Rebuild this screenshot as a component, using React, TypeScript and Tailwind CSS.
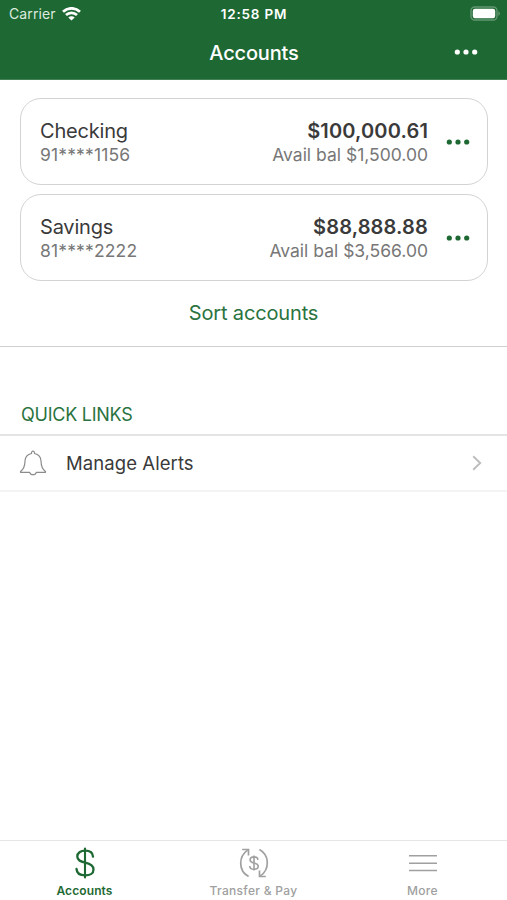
const accounts = [
  { name: 'Checking', number: '91****1156', balance: '$100,000.61', available: '$1,500.00' },
  { name: 'Savings', number: '81****2222', balance: '$88,888.88', available: '$3,566.00' },
];

function Dots() {
  return (
    <svg width="24" height="6" viewBox="0 0 24 6" fill="currentColor" aria-hidden="true">
      <circle cx="3.3" cy="3" r="2.6" />
      <circle cx="12" cy="3" r="2.6" />
      <circle cx="20.7" cy="3" r="2.6" />
    </svg>
  );
}

function WifiIcon() {
  return (
    <svg width="19" height="14" viewBox="0 0 19 14" fill="none" stroke="currentColor" strokeWidth="2.7" aria-hidden="true">
      <path d="M1 4.7a12.3 12.3 0 0 1 17 0" />
      <path d="M4 8.1a8 8 0 0 1 11 0" />
      <path d="M9.5 13.6 6.3 10.5a4.5 4.5 0 0 1 6.4 0Z" fill="currentColor" stroke="none" />
    </svg>
  );
}

function BatteryIcon() {
  return (
    <svg width="31" height="15" viewBox="0 0 31 15" fill="none" aria-hidden="true">
      <rect x="1" y="1" width="26" height="13" rx="3.8" stroke="#fff" strokeOpacity="0.3" strokeWidth="1.4" />
      <rect x="2.8" y="2.8" width="22.4" height="9.4" rx="2.2" fill="#fff" />
      <path d="M28.5 5.2c1.6.6 1.6 4 0 4.6Z" fill="#fff" fillOpacity="0.4" />
    </svg>
  );
}

function BellIcon() {
  return (
    <svg width="28" height="26" viewBox="0 0 28 26" fill="none" stroke="#8c8c8c" strokeWidth="1.2" strokeLinejoin="round" aria-hidden="true">
      <path d="M12.5 3.5C12.4 2 13 1.2 14 1.2s1.6.8 1.5 2.3c4 .9 6.4 3.6 6.5 7.5.1 5.5.9 8 4.5 10.6v.7h-9.2c-.4 1.5-1.6 2.400-3.300 2.400s-2.900-.9-3.300-2.400H1.500v-.7C5.100 19 5.900 16.500 6 11c.1-3.900 2.500-6.600 6.500-7.500Z" />
    </svg>
  );
}

function DollarIcon() {
  return (
    <svg width="20" height="32" viewBox="0 0 20 32" fill="none" stroke="currentColor" strokeWidth="2.3" strokeLinecap="round" aria-hidden="true">
      <path d="M10 1.5v29" strokeWidth="2.1" />
      <path d="M18 9.6C17.8 5.8 14.8 3.7 10.2 3.7 5.5 3.7 2.3 5.9 2.3 9.5c0 3.800 3 5 7.900 6.200 5 1.200 8.300 2.700 8.300 6.700 0 3.700-3.300 6-8.300 6-5.200 0-8.500-2.400-8.700-6.500" />
    </svg>
  );
}

function TransferIcon() {
  return (
    <svg width="32" height="32" viewBox="0 0 32 32" fill="none" stroke="currentColor" strokeWidth="1.7" aria-hidden="true">
      <path d="M10.6 29.5C.2 24 .3 9.5 9.6 3.1" />
      <path d="M4.2 2.5h6.3v6" />
      <path d="M21.4 2.5c10.4 5.5 10.3 20 1 26.4" />
      <path d="M27.8 29.5h-6.3v-6" />
      <path d="M16 8.5v15M19.9 12.9c-.1-1.900-1.600-3-3.900-3s-3.900 1.100-3.900 3c0 2 1.500 2.500 3.900 3.100s4.200 1.200 4.200 3.300c0 1.900-1.800 3-4.200 3-2.500 0-4.200-1.200-4.300-3.300" strokeWidth="1.6" />
    </svg>
  );
}

function MenuIcon() {
  return (
    <svg width="30" height="20" viewBox="0 0 30 20" stroke="currentColor" strokeWidth="1.6" aria-hidden="true">
      <path d="M1 2.7h28M1 10.2h28M1 17.5h28" />
    </svg>
  );
}

export default function App() {
  return (
    <div className="flex h-[900px] w-[507px] flex-col overflow-hidden bg-white font-['Inter','Liberation_Sans',sans-serif] text-[#3a3a3a]">
      <header className="h-20 shrink-0 border-b border-[#448055] bg-[#1e6933] text-white">
        <div className="grid h-[27px] grid-cols-3 items-center pr-[6px] pl-[9px]">
          <div className="flex items-center gap-[6px]">
            <span className="text-[14px] tracking-[0.1px] text-[#dce9df]">Carrier</span>
            <WifiIcon />
          </div>
          <span className="-ml-[2px] pt-px text-center text-[13.5px] font-semibold tracking-[0.8px]">12:58 PM</span>
          <div className="flex justify-end">
            <BatteryIcon />
          </div>
        </div>
        <div className="grid h-[51px] grid-cols-[1fr_auto_1fr] items-center pr-[29px] pl-[30px]">
          <h1 className="col-start-2 text-[20px] font-medium tracking-[-0.15px]">Accounts</h1>
          <button className="justify-self-end pb-px" aria-label="More options">
            <Dots />
          </button>
        </div>
      </header>

      <main className="flex-1">
        <section className="border-b border-[#cfcfcf] pt-[18px]">
          <div className="flex flex-col gap-[9px] pr-[19px] pl-5">
            {accounts.map((account) => (
              <div
                key={account.name}
                className="flex h-[87px] items-center rounded-[21px] border-[1.5px] border-[#d3d3d3] pr-[17px] pl-[19px]"
              >
                <div className="flex-1 pt-px">
                  <div className="text-[20px] leading-[24px] tracking-[-0.2px]">{account.name}</div>
                  <div className="text-[17.5px] leading-[23px] tracking-[0.15px] text-[#777]">{account.number}</div>
                </div>
                <div className="pt-px text-right">
                  <div className="text-[20px] leading-[24px] font-semibold tracking-[0.15px]">{account.balance}</div>
                  <div className="text-[17.5px] leading-[23px] text-[#777]">Avail bal {account.available}</div>
                </div>
                <button className="ml-[18px] text-[#1e6933]" aria-label="Account options">
                  <Dots />
                </button>
              </div>
            ))}
          </div>
          <button className="flex h-[65px] w-full items-center justify-center pb-px text-[20px] tracking-[-0.15px] text-[#2a7340]">
            Sort accounts
          </button>
        </section>

        <section>
          <h2 className="flex h-[89px] items-end border-b-2 border-[#e4e4e4] px-[21px] pb-[7px] text-[18px] leading-[24px] tracking-[-0.25px] text-[#2a7340]">
            QUICK LINKS
          </h2>
          <a className="flex h-[56px] items-center border-b-2 border-[#f3f3f3] pr-[25px] pl-[19px]">
            <BellIcon />
            <span className="ml-[19px] flex-1 pt-[2px] text-[18.5px] tracking-[0.08px]">Manage Alerts</span>
            <svg width="10" height="16" viewBox="0 0 10 16" fill="none" stroke="#bdbdbd" strokeWidth="1.9" aria-hidden="true">
              <path d="m1.2 1.2 7 6.8-7 6.8" />
            </svg>
          </a>
        </section>
      </main>

      <nav className="grid h-[60px] shrink-0 grid-cols-3 border-t border-[#e6e6e6] text-[12px] font-medium text-[#a0a0a0]">
        <a className="flex flex-col items-center text-[#1e6933]">
          <span className="flex h-[44px] items-center">
            <DollarIcon />
          </span>
          <span className="leading-[12px] font-semibold tracking-[0.1px]">Accounts</span>
        </a>
        <a className="flex flex-col items-center">
          <span className="flex h-[44px] items-center">
            <TransferIcon />
          </span>
          <span className="leading-[12px] tracking-[0.3px]">Transfer &amp; Pay</span>
        </a>
        <a className="flex flex-col items-center">
          <span className="flex h-[44px] items-center">
            <MenuIcon />
          </span>
          <span className="leading-[12px] tracking-[0.3px]">More</span>
        </a>
      </nav>
    </div>
  );
}
